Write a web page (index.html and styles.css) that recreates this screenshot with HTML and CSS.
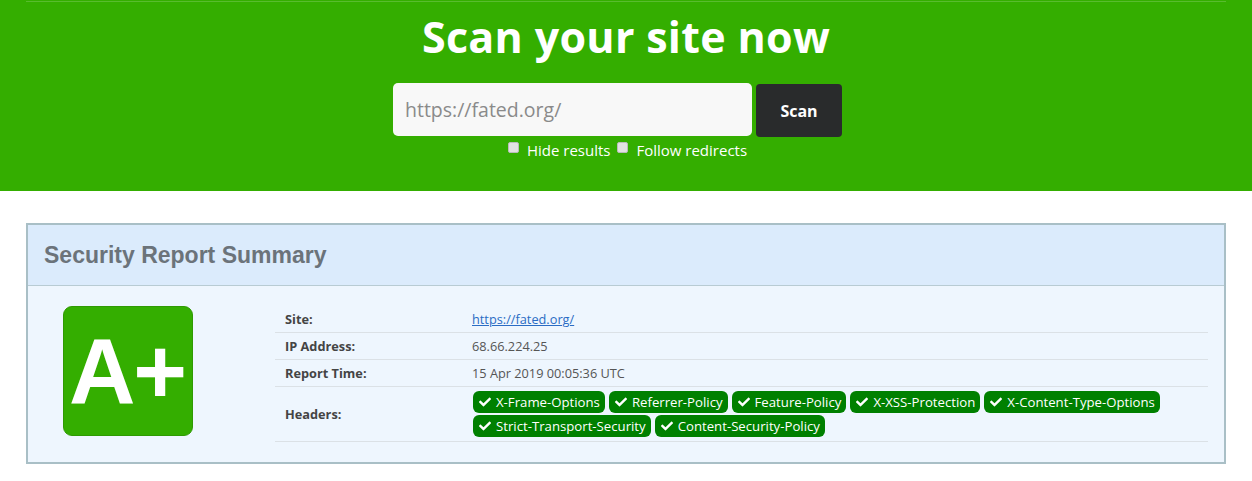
FILE: index.html
```html
<!DOCTYPE html>
<html>
<head>
<meta charset="utf-8">
<link rel="stylesheet" href="styles.css">
</head>
<body>
<section class="hero">
  <hr class="hero-rule">
  <h1 class="hero-title">Scan your site now</h1>
  <form class="scan-form">
    <div class="scan-row">
      <input class="scan-input" type="text" placeholder="https://fated.org/">
      <button class="scan-btn" type="button">Scan</button>
    </div>
    <div class="scan-options">
      <label class="opt"><span class="box"></span>Hide results</label>
      <label class="opt"><span class="box"></span>Follow redirects</label>
    </div>
  </form>
</section>

<div class="card">
  <div class="card-head">Security Report Summary</div>
  <div class="card-body">
    <div class="grade-cell">
      <div class="grade">A+</div>
    </div>
    <table class="report">
      <tr><th>Site:</th><td><a href="#" class="site-link">https://fated.org/</a></td></tr>
      <tr><th>IP Address:</th><td>68.66.224.25</td></tr>
      <tr><th>Report Time:</th><td>15 Apr 2019 00:05:36 UTC</td></tr>
      <tr class="headers-row"><th>Headers:</th><td>
        <div class="badges">
          <span class="badge"><svg class="chk" viewBox="0 0 512 512"><path d="M173.9 439.4 7.5 273c-10-10-10-26.2 0-36.2l36.2-36.2c10-10 26.2-10 36.2 0L192 312.7 432.1 72.6c10-10 26.2-10 36.2 0l36.2 36.2c10 10 10 26.2 0 36.2L210.1 439.4c-10 10-26.2 10-36.2 0z"/></svg>X-Frame-Options</span>
          <span class="badge"><svg class="chk" viewBox="0 0 512 512"><path d="M173.9 439.4 7.5 273c-10-10-10-26.2 0-36.2l36.2-36.2c10-10 26.2-10 36.2 0L192 312.7 432.1 72.6c10-10 26.2-10 36.2 0l36.2 36.2c10 10 10 26.2 0 36.2L210.1 439.4c-10 10-26.2 10-36.2 0z"/></svg>Referrer-Policy</span>
          <span class="badge"><svg class="chk" viewBox="0 0 512 512"><path d="M173.9 439.4 7.5 273c-10-10-10-26.2 0-36.2l36.2-36.2c10-10 26.2-10 36.2 0L192 312.7 432.1 72.6c10-10 26.2-10 36.2 0l36.2 36.2c10 10 10 26.2 0 36.2L210.1 439.4c-10 10-26.2 10-36.2 0z"/></svg>Feature-Policy</span>
          <span class="badge"><svg class="chk" viewBox="0 0 512 512"><path d="M173.9 439.4 7.5 273c-10-10-10-26.2 0-36.2l36.2-36.2c10-10 26.2-10 36.2 0L192 312.7 432.1 72.6c10-10 26.2-10 36.2 0l36.2 36.2c10 10 10 26.2 0 36.2L210.1 439.4c-10 10-26.2 10-36.2 0z"/></svg>X-XSS-Protection</span>
          <span class="badge"><svg class="chk" viewBox="0 0 512 512"><path d="M173.9 439.4 7.5 273c-10-10-10-26.2 0-36.2l36.2-36.2c10-10 26.2-10 36.2 0L192 312.7 432.1 72.6c10-10 26.2-10 36.2 0l36.2 36.2c10 10 10 26.2 0 36.2L210.1 439.4c-10 10-26.2 10-36.2 0z"/></svg>X-Content-Type-Options</span>
          <span class="badge"><svg class="chk" viewBox="0 0 512 512"><path d="M173.9 439.4 7.5 273c-10-10-10-26.2 0-36.2l36.2-36.2c10-10 26.2-10 36.2 0L192 312.7 432.1 72.6c10-10 26.2-10 36.2 0l36.2 36.2c10 10 10 26.2 0 36.2L210.1 439.4c-10 10-26.2 10-36.2 0z"/></svg>Strict-Transport-Security</span>
          <span class="badge"><svg class="chk" viewBox="0 0 512 512"><path d="M173.9 439.4 7.5 273c-10-10-10-26.2 0-36.2l36.2-36.2c10-10 26.2-10 36.2 0L192 312.7 432.1 72.6c10-10 26.2-10 36.2 0l36.2 36.2c10 10 10 26.2 0 36.2L210.1 439.4c-10 10-26.2 10-36.2 0z"/></svg>Content-Security-Policy</span>
        </div>
      </td></tr>
    </table>
  </div>
</div>
</body>
</html>
```

FILE: styles.css
```css
* { box-sizing: border-box; }
body {
  margin: 0;
  font-family: "Open Sans", "Noto Sans", sans-serif;
  background: #fff;
}
.hero {
  background: #34ae00;
  padding: 1px 0 0;
  height: 191px;
  text-align: center;
}
.hero-rule {
  width: 1200px;
  margin: 0 auto;
  border: 0;
  border-top: 1px solid rgba(255,255,255,0.18);
  height: 0;
}
.hero-title {
  margin: 7px 0 0;
  font-size: 43px;
  line-height: 56px;
  font-weight: 700;
  color: #fff;
  letter-spacing: 0.3px;
}
.scan-form { margin-top: 18px; }
.scan-row {
  display: flex;
  justify-content: center;
  align-items: flex-start;
  gap: 4px;
  padding-right: 17px;
}
.scan-input {
  width: 359px;
  height: 53px;
  border: 0;
  border-radius: 5px;
  background: #f8f8f8;
  padding: 0 12px;
  font-family: "Open Sans", sans-serif;
  font-size: 19.5px;
  color: #888;
}
.scan-input::placeholder { color: #8a8a8a; }
.scan-btn {
  width: 86px;
  height: 53px;
  margin-top: 1px;
  border: 0;
  border-radius: 4px;
  background: #292b2c;
  color: #fff;
  font-family: "Open Sans", sans-serif;
  font-weight: 700;
  font-size: 16px;
}
.scan-options {
  margin-top: 3px;
  display: flex;
  justify-content: center;
  gap: 7px;
  color: #fff;
  font-size: 15px;
  line-height: 20px;
  padding-left: 3px;
}
.opt { display: inline-flex; align-items: center; }
.box {
  display: inline-block;
  width: 11px;
  height: 11px;
  background: #e2e2e2;
  border: 1px solid #bbb;
  border-radius: 2px;
  margin-right: 8px;
  margin-top: -5px;
}

.card {
  width: 1200px;
  margin: 32px auto 0;
  border: 2px solid #a9bfc6;
  background: #eef6fe;
}
.card-head {
  height: 61px;
  background: #dbebfc;
  border-bottom: 1px solid #b8cbd3;
  padding: 0 16px;
  font-family: "Liberation Sans", Arial, sans-serif;
  font-weight: 700;
  font-size: 23px;
  line-height: 61px;
  color: #6b737a;
}
.card-body {
  display: flex;
  padding: 20px 16px 20px 0;
}
.grade-cell {
  width: 247px;
  padding-left: 35px;
  flex: none;
}
.grade {
  width: 130px;
  height: 130px;
  background: #34ae00;
  border: 1px solid #2f9a02;
  border-radius: 9px;
  color: #fff;
  font-family: "Liberation Sans", Arial, sans-serif;
  font-weight: 700;
  font-size: 92px;
  line-height: 128px;
  text-align: center;
  letter-spacing: -2px;
  padding-right: 2px;
}
.report {
  flex: 1;
  border-collapse: collapse;
  font-size: 12.75px;
}
.report th, .report td {
  border-bottom: 1px solid #dbe1e6;
  height: 27px;
  padding: 0 10px;
  text-align: left;
  vertical-align: middle;
}
.report th {
  width: 187px;
  color: #444;
  font-weight: 700;
}
.report td { color: #555; }
.report tr:first-child th, .report tr:first-child td { height: 26px; }
.headers-row th, .headers-row td { height: 55px; }
.site-link { color: #2a6cc4; text-decoration: underline; }
.badges {
  display: flex;
  flex-wrap: wrap;
  gap: 2px 4px;
  padding: 1px 0;
  margin-left: 1px;
}
.badge {
  display: inline-flex;
  align-items: center;
  height: 22px;
  padding: 0 5px 0 6px;
  background: #008000;
  color: #fff;
  border-radius: 6px;
  font-size: 13.2px;
}
.chk {
  width: 12px;
  height: 12px;
  fill: #fff;
  margin-right: 5px;
}
```
